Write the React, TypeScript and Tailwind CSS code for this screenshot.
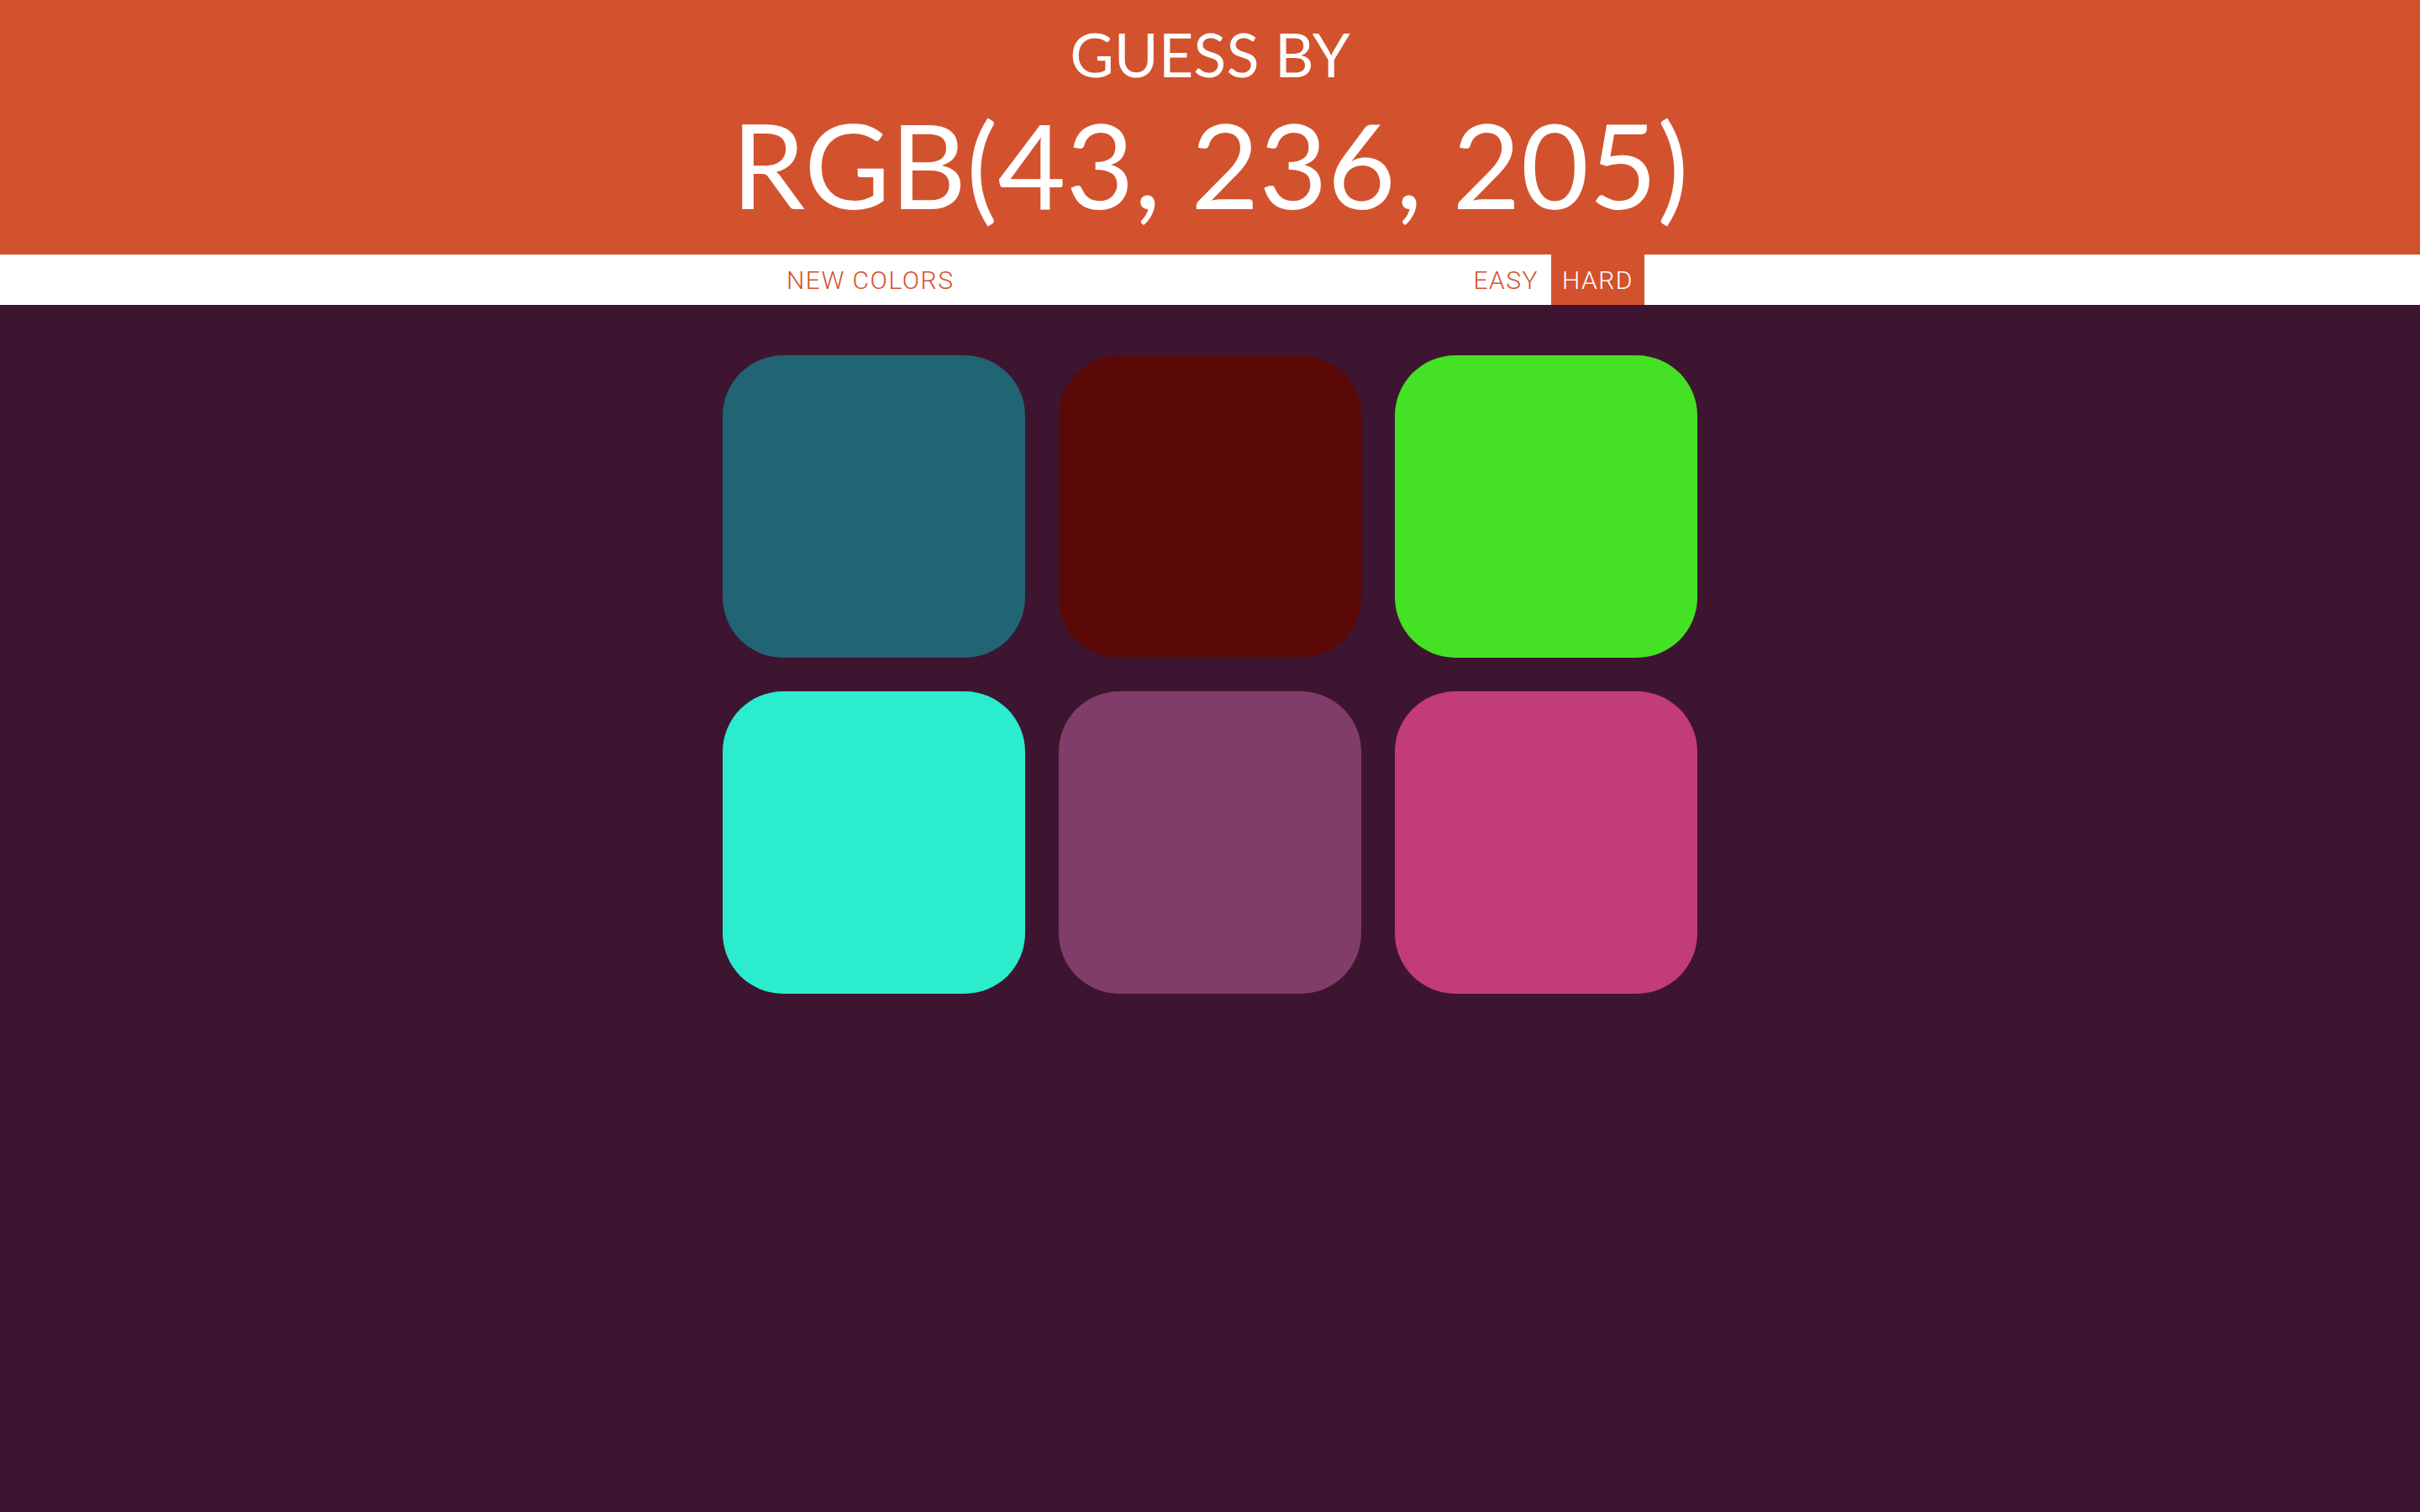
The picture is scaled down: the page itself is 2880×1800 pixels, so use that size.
import React, { useState } from "react";

const colors = ["#216473", "#5a0906", "#44e124", "#2beccd", "#813d69", "#c33c7a"];

const App = () => {
  const [mode, setMode] = useState("hard");
  const target = "RGB(43, 236, 205)";

  return (
    <div className="min-h-screen bg-[#3e1530]">
      <header className="h-[303px] bg-[#d2522e] pt-[28px] text-center text-white font-['Lato','Noto_Sans',sans-serif]">
        <h1 className="text-[72px] leading-none font-normal">GUESS BY</h1>
        <div className="mt-[25px] text-[140px] leading-none font-normal">{target}</div>
      </header>

      <nav className="h-[60px] bg-white flex items-stretch justify-center font-['Roboto','Liberation_Sans',sans-serif] font-light text-[30px] tracking-[1.5px]">
        <button className="px-[13px] text-[#d2522e] uppercase">New Colors</button>
        <span className="w-[592px]"></span>
        <button
          onClick={() => setMode("easy")}
          className={
            mode === "easy"
              ? "px-[13px] bg-[#d2522e] text-white uppercase"
              : "px-[13px] text-[#d2522e] uppercase"
          }
        >
          Easy
        </button>
        <button
          onClick={() => setMode("hard")}
          className={
            mode === "hard"
              ? "ml-[2px] px-[13px] bg-[#d2522e] text-white uppercase"
              : "ml-[2px] px-[13px] text-[#d2522e] uppercase"
          }
        >
          Hard
        </button>
      </nav>

      <main className="w-[1160px] mx-auto mt-[60px] grid grid-cols-3 gap-[40px]">
        {(mode === "hard" ? colors : colors.slice(0, 3)).map((c) => (
          <div key={c} className="h-[360px] rounded-[72px]" style={{ backgroundColor: c }} />
        ))}
      </main>
    </div>
  );
};

export default App;
